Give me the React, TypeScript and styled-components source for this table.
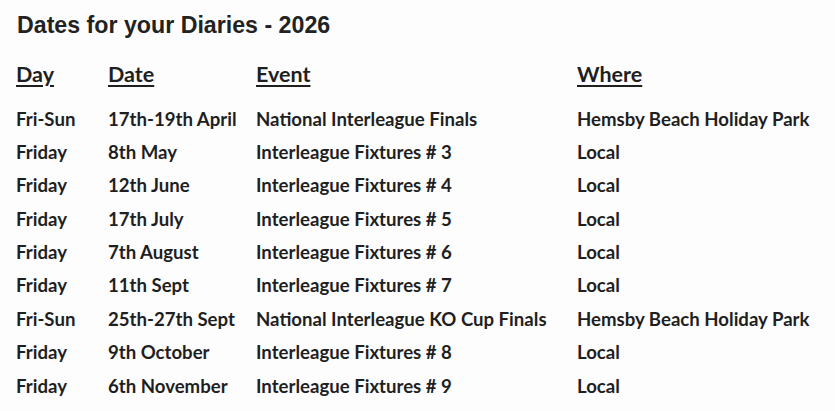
import styled, { createGlobalStyle } from "styled-components";

const GlobalStyle = createGlobalStyle`
  html, body {
    margin: 0;
    padding: 0;
    background: #fdfdfd;
  }
`;

const Page = styled.div`
  width: 835px;
  height: 411px;
  overflow: hidden;
  padding: 12px 0 0 16px;
  box-sizing: border-box;
  color: #1f1f1f;
`;

const Title = styled.h1`
  margin: 0 0 0 1px;
  font-family: "Liberation Sans", Arial, sans-serif;
  font-weight: 700;
  font-size: 23.2px;
  line-height: 27px;
  color: #222;
`;

const Table = styled.div`
  display: grid;
  grid-template-columns: 92px 148px 321px auto;
  grid-template-rows: 44.5px;
  grid-auto-rows: 33.4px;
  margin-top: 19px;
  font-family: Lato, "Open Sans", sans-serif;
  font-weight: 700;
`;

const Cell = styled.div<{ $head?: boolean }>`
  font-size: ${(p) => (p.$head ? "21.5px" : "18.6px")};
  line-height: 33.4px;
  white-space: nowrap;
  text-decoration: ${(p) => (p.$head ? "underline" : "none")};
  text-decoration-thickness: 2px;
  text-underline-offset: 3px;
`;

const rows: [string, string, string, string][] = [
  ["Fri-Sun", "17th-19th April", "National Interleague Finals", "Hemsby Beach Holiday Park"],
  ["Friday", "8th May", "Interleague Fixtures # 3", "Local"],
  ["Friday", "12th June", "Interleague Fixtures # 4", "Local"],
  ["Friday", "17th July", "Interleague Fixtures # 5", "Local"],
  ["Friday", "7th August", "Interleague Fixtures # 6", "Local"],
  ["Friday", "11th Sept", "Interleague Fixtures # 7", "Local"],
  ["Fri-Sun", "25th-27th Sept", "National Interleague KO Cup Finals", "Hemsby Beach Holiday Park"],
  ["Friday", "9th October", "Interleague Fixtures # 8", "Local"],
  ["Friday", "6th November", "Interleague Fixtures # 9", "Local"],
];

const App = () => {
  return (
    <>
      <GlobalStyle />
      <Page>
        <Title>Dates for your Diaries - 2026</Title>
        <Table>
          {["Day", "Date", "Event", "Where"].map((h) => (
            <Cell key={h} $head>
              {h}
            </Cell>
          ))}
          {rows.map((r, i) =>
            r.map((c, j) => <Cell key={i + "-" + j}>{c}</Cell>)
          )}
        </Table>
      </Page>
    </>
  );
};

export default App;
